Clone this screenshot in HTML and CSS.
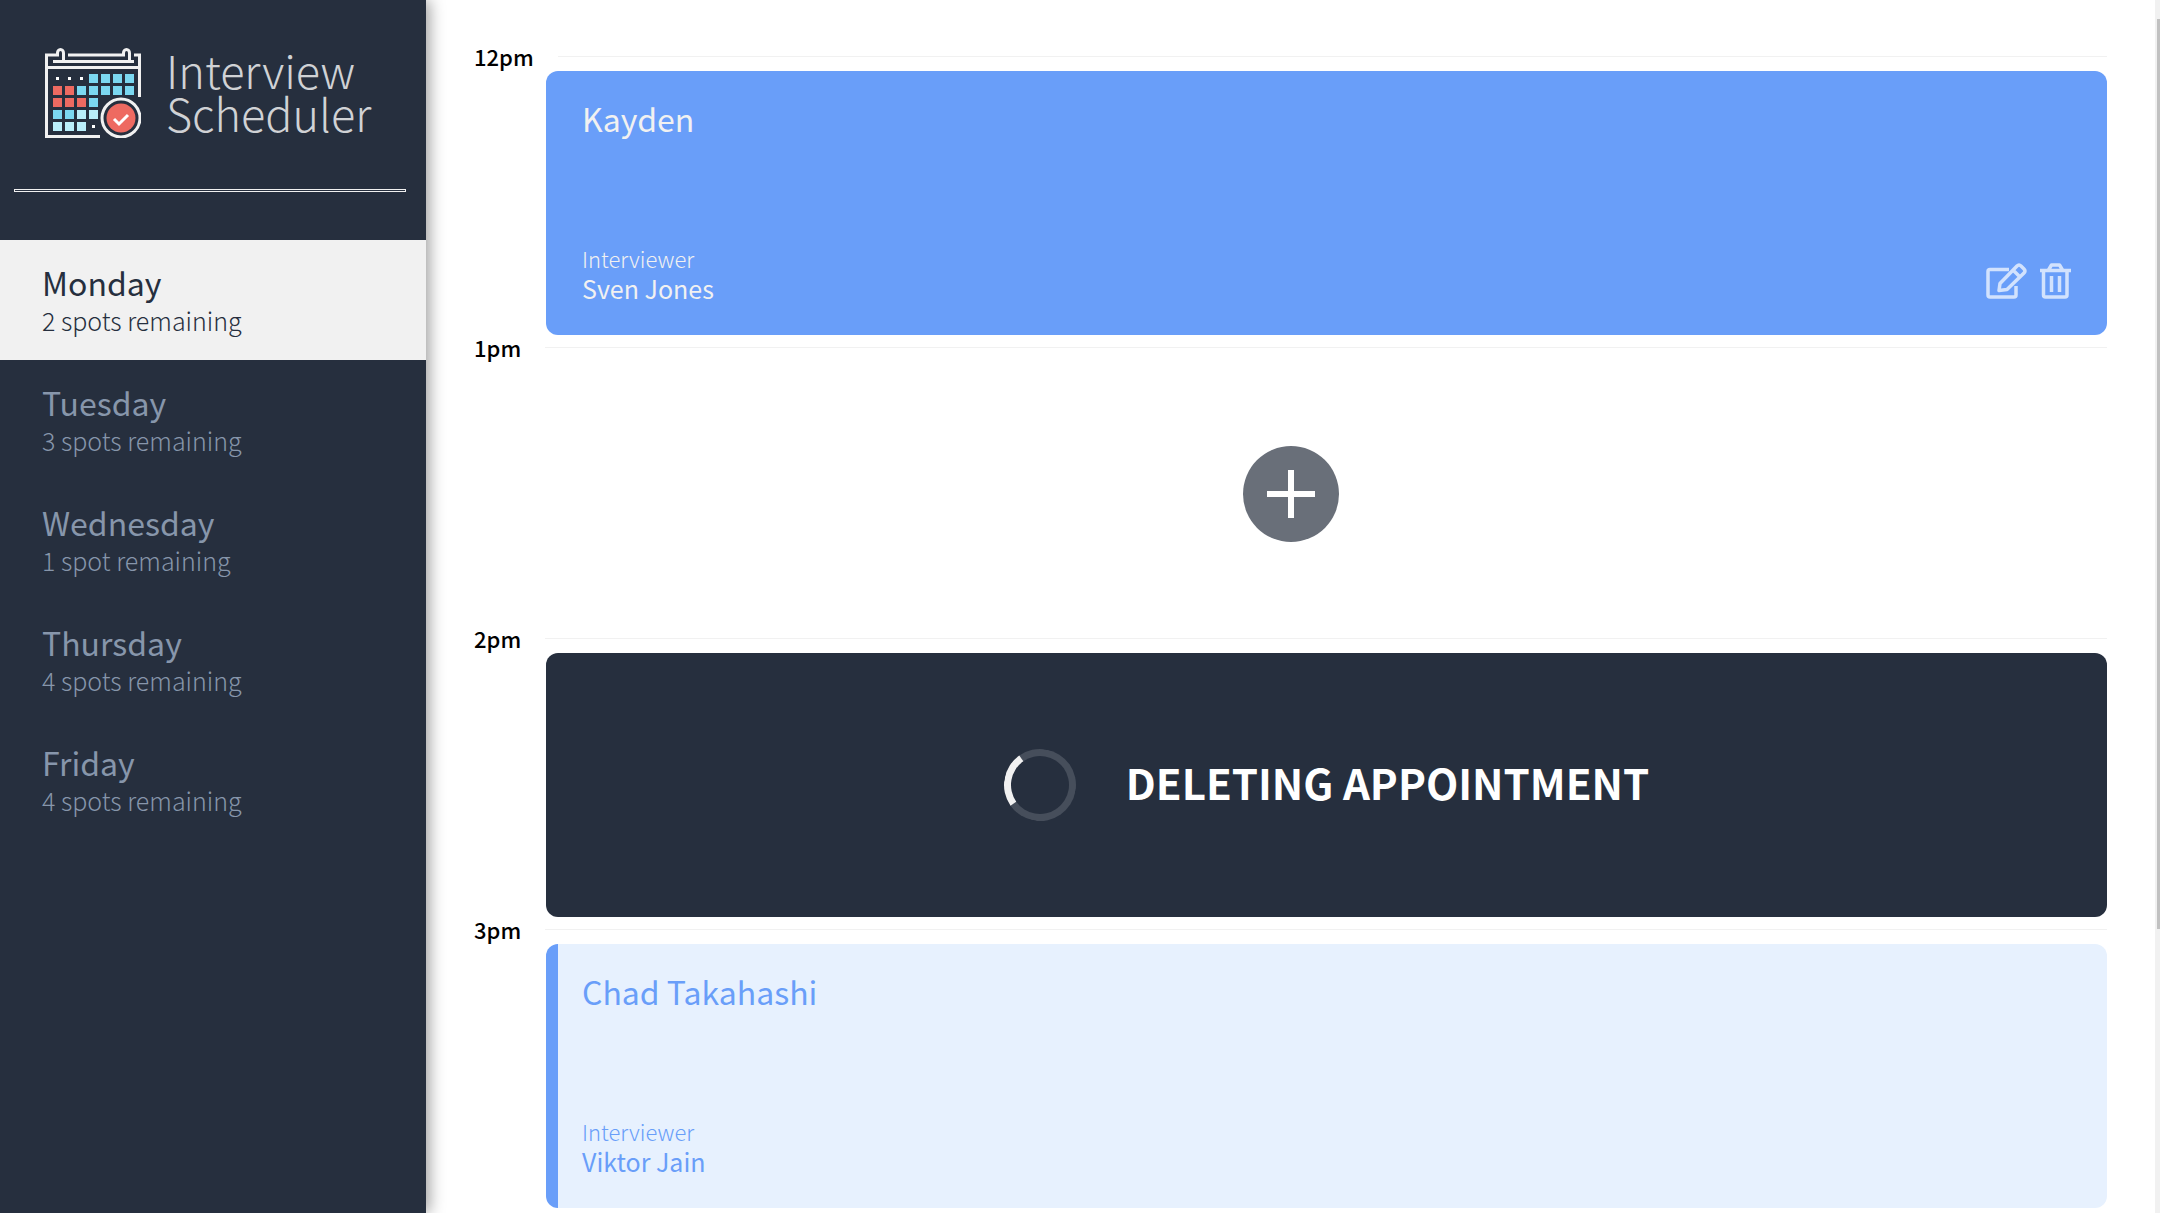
FILE: index.html
```html
<!DOCTYPE html>
<html lang="en">
<head>
<meta charset="utf-8">
<title>Interview Scheduler</title>
<meta name="viewport" content="width=device-width, initial-scale=1">
<link rel="stylesheet" href="styles.css">
</head>
<body>
<main class="layout">
  <section class="sidebar">
    <div class="brand">
      <svg class="brand-mark" viewBox="0 0 96 90" aria-hidden="true">
        <g fill="none" stroke="#f1f1f1" stroke-width="3">
          <path d="M55 88.500H1.500V7H12.500V5a3 3.500 0 0 1 6 0V13.500M23 7H78.500V5a3 3.500 0 0 1 6 0V13.500M89 7H94.500V49M8 13.500H89M1.500 19.500H94"/>
          <circle cx="76" cy="70" r="19"/>
        </g>
        <path fill="#7bd8f1" d="M44 26h9v9h-9zM56 26h9v9h-9zM68 26h9v9h-9zM80 26h9v9h-9zM32 38h9v9h-9zM44 38h9v9h-9zM56 38h9v9h-9zM68 38h9v9h-9zM80 38h9v9h-9zM44 50h9v9h-9zM8 62h9v9h-9zM20 62h9v9h-9z"/>
        <path fill="#ee6a61" d="M8 38h9v9h-9zM20 38h9v9h-9zM8 50h9v9h-9zM20 50h9v9h-9zM32 50h9v9h-9z"/>
        <path fill="#b9eefa" d="M32 62h9v9h-9zM44 62h9v9h-9zM8 74h9v9h-9zM20 74h9v9h-9zM32 74h9v9h-9z"/>
        <path fill="#fff" d="M11 29h3v3h-3zM23 29h3v3h-3zM35 29h3v3h-3zM47 77h3v3h-3z"/>
        <circle cx="76" cy="70" r="14.500" fill="#ee6a61"/>
        <path d="M69 71l5 5 9-9" fill="none" stroke="#fff" stroke-width="3"/>
      </svg>
      <h1 class="brand-name">Interview<br>Scheduler</h1>
    </div>
    <hr class="separator">
    <nav>
      <ul class="days">
        <li class="day day-selected"><a href="#monday"><span class="day-name">Monday</span><span class="day-spots">2 spots remaining</span></a></li>
        <li class="day"><a href="#tuesday"><span class="day-name">Tuesday</span><span class="day-spots">3 spots remaining</span></a></li>
        <li class="day"><a href="#wednesday"><span class="day-name">Wednesday</span><span class="day-spots">1 spot remaining</span></a></li>
        <li class="day"><a href="#thursday"><span class="day-name">Thursday</span><span class="day-spots">4 spots remaining</span></a></li>
        <li class="day"><a href="#friday"><span class="day-name">Friday</span><span class="day-spots">4 spots remaining</span></a></li>
      </ul>
    </nav>
  </section>
  <section class="schedule">
    <article class="slot">
      <header class="slot-time"><h2>12pm</h2><span class="slot-line"></span></header>
      <div class="card card-active">
        <h3 class="student">Kayden</h3>
        <div class="card-foot">
          <div><h4 class="role">Interviewer</h4><p class="interviewer">Sven Jones</p></div>
          <div class="actions">
            <button type="button" aria-label="Edit">
              <svg width="41" height="36" viewBox="0 0 41 36" fill="none" stroke="currentColor" stroke-width="3.500" stroke-linejoin="round"><path d="M23 6.500H4q-2 0-2 2V32q0 2 2 2H28q2 0 2-2V23"/><path d="M13 27.500l1-7L31 3q2-2 4 0l3 3q2 2 0 4L21 26.500zM27 7l7 7"/></svg>
            </button>
            <button type="button" aria-label="Delete">
              <svg width="32" height="36" viewBox="0 0 32 36" fill="none" stroke="currentColor" stroke-width="3.500" stroke-linejoin="round"><path d="M1 7.500H32M9.500 7l3-5H20.500l3 5M4.500 8V32q0 2 2 2H26q2 0 2-2V8M12.500 13V29M20.500 13V29"/></svg>
            </button>
          </div>
        </div>
      </div>
    </article>
    <article class="slot">
      <header class="slot-time"><h2>1pm</h2><span class="slot-line"></span></header>
      <div class="empty">
        <button type="button" class="add" aria-label="Add"><svg width="96" height="96" viewBox="0 0 96 96"><circle cx="48" cy="48" r="48" fill="#696f79"/><path d="M48 24V72M24 48H72" stroke="#fff" stroke-width="6"/></svg></button>
      </div>
    </article>
    <article class="slot">
      <header class="slot-time"><h2>2pm</h2><span class="slot-line"></span></header>
      <div class="card card-status" role="status">
        <span class="spinner"></span>
        <p class="status-text">DELETING APPOINTMENT</p>
      </div>
    </article>
    <article class="slot">
      <header class="slot-time"><h2>3pm</h2><span class="slot-line"></span></header>
      <div class="card card-booked">
        <h3 class="student">Chad Takahashi</h3>
        <div class="card-foot">
          <div><h4 class="role">Interviewer</h4><p class="interviewer">Viktor Jain</p></div>
        </div>
      </div>
    </article>
  </section>
</main>
<div class="scroll-track" aria-hidden="true"><div class="scroll-thumb"></div></div>
</body>
</html>
```
FILE: styles.css
```css
* { box-sizing: border-box; }
body, h1, h2, h3, h4, p, ul { margin: 0; padding: 0; font-weight: 400; }
body {
  font-family: "Noto Sans CJK SC", "Noto Sans", sans-serif;
  background: #fff;
  color: #000;
}
button { background: none; border: 0; padding: 0; cursor: pointer; color: inherit; }
svg { display: block; }
.layout { display: flex; height: 100vh; overflow: hidden; }
.sidebar {
  flex: none;
  width: 426px;
  background: #262f3e;
  box-shadow: 3px 0 15px rgba(0, 0, 0, 0.4);
}
.brand { display: flex; align-items: flex-start; gap: 25px; padding: 48px 40px 0 45px; height: 189px; }
.brand-mark { flex: none; width: 96px; height: 90px; }
.brand-name { font-size: 45px; line-height: 43px; font-weight: 300; color: #d0d2d5; }
.separator { height: 3px; margin: 0 20px 48px 14px; border: 1px solid #f1f1f1; }
.days { list-style: none; }
.day a {
  display: flex;
  flex-direction: column;
  justify-content: center;
  height: 120px;
  padding: 0 42px;
  text-decoration: none;
  color: #8796ab;
}
.day-selected a { background: #f1f1f1; color: #262f3e; }
.day-name { font-size: 32px; line-height: 40px; }
.day-spots { font-size: 25px; line-height: 36px; font-weight: 300; }
.schedule { flex: 1; padding: 41px 53px 0 48px; overflow: hidden; }
.slot { height: 291px; }
.slot-time { display: flex; align-items: center; gap: 24px; height: 30px; }
.slot-time h2 { font-size: 22px; line-height: 30px; font-weight: 500; }
.slot-line { flex: 1; height: 1px; background: #f1f1f1; }
.card { height: 264px; margin-left: 72px; border-radius: 12px; padding: 24px 36px 32px; }
.card-active, .card-booked { display: flex; flex-direction: column; justify-content: space-between; }
.card-active { background: #699ef9; color: #f1f1f1; }
.card-booked { background: #e7f1fe; color: #699ef9; border-left: 12px solid #699ef9; padding-left: 24px; }
.student { font-size: 32px; line-height: 46px; }
.card-foot { display: flex; justify-content: space-between; align-items: flex-end; }
.role { font-size: 22px; line-height: 30px; font-weight: 300; }
.interviewer { font-size: 25px; line-height: 30px; }
.actions { display: flex; gap: 12px; color: #d2e2fd; padding-bottom: 4px; }
.empty { height: 264px; display: flex; align-items: center; justify-content: center; }
.card-status { background: #262f3e; display: flex; align-items: center; justify-content: center; gap: 50px; padding: 0 36px; }
.spinner {
  width: 72px;
  height: 72px;
  border-radius: 50%;
  border: 7px solid #464e5b;
  border-left-color: #f1f1f1;
  transform: rotate(10deg);
}
.status-text { font-size: 42px; line-height: 60px; font-weight: 700; color: #fff; padding-bottom: 6px; }
.scroll-track { position: fixed; top: 0; right: 0; bottom: 0; width: 5px; background: #f1f1f1; padding: 19px 0 0 2px; }
.scroll-thumb { height: 75vh; background: #c1c1c1; }
```
